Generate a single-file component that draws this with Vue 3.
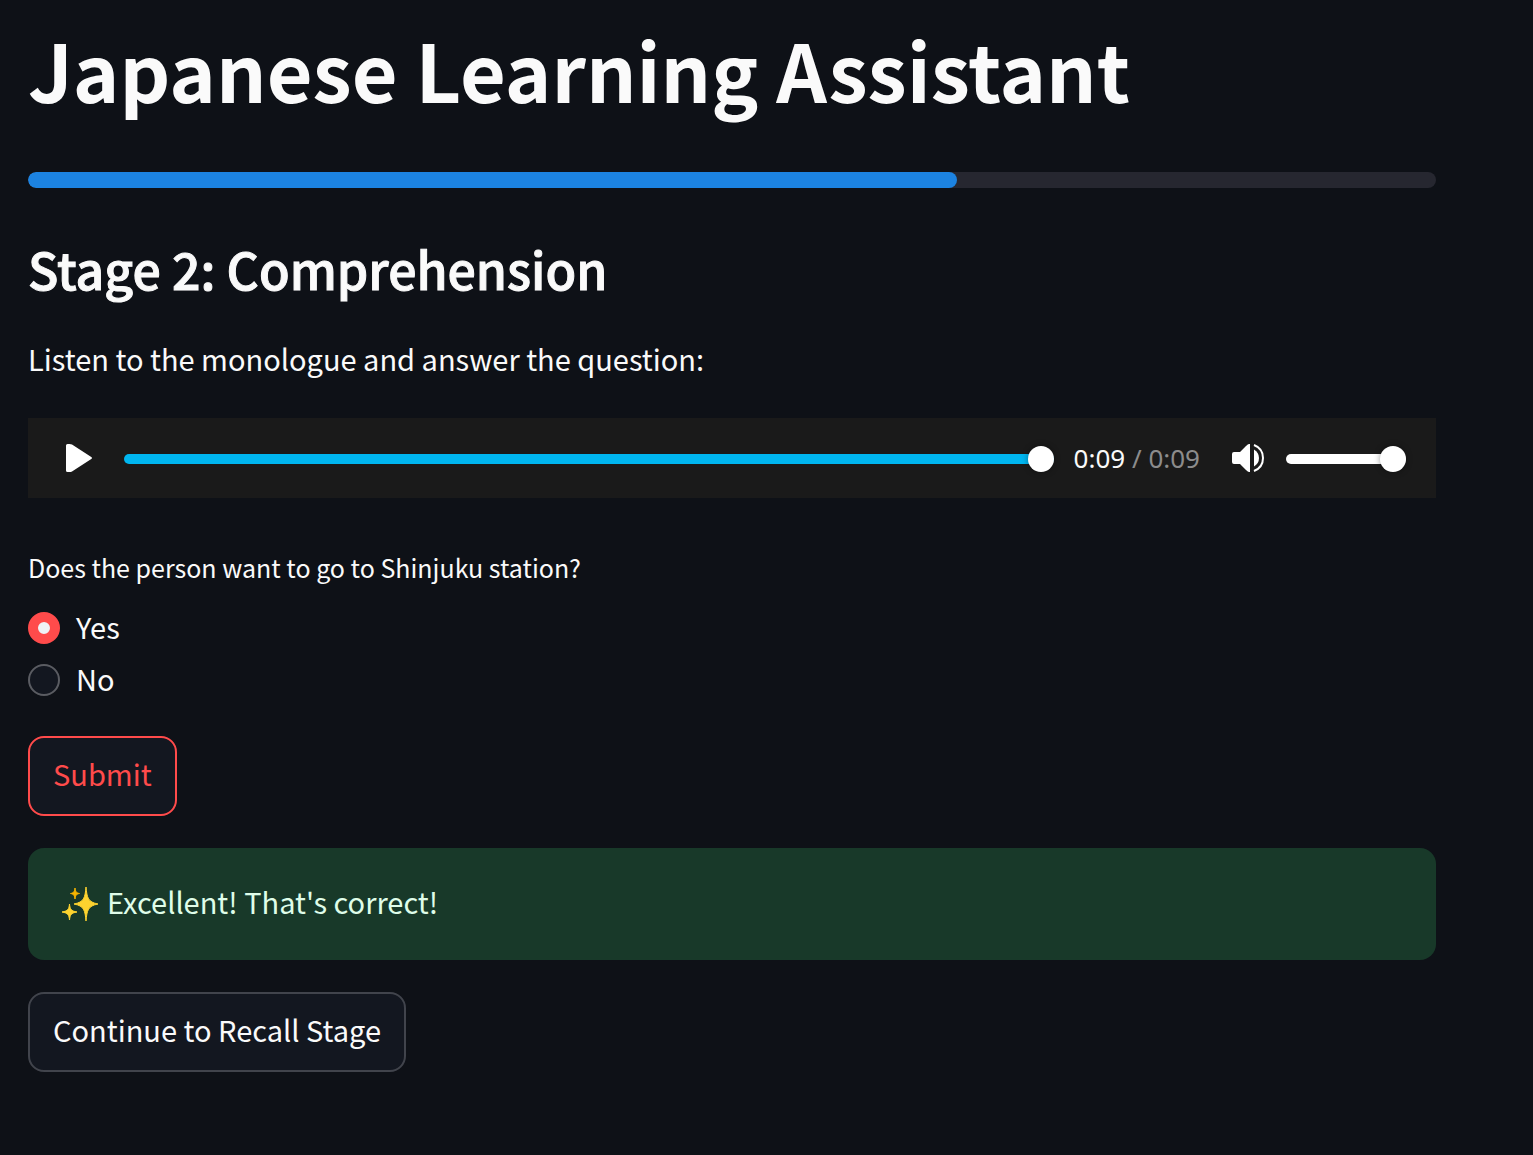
<script setup>
import { ref, computed } from 'vue'

const progress = ref(66)
const answer = ref('Yes')
const options = ['Yes', 'No']
const position = ref(9)
const duration = 9
const volume = ref(100)

const clock = (s) => `${Math.floor(s / 60)}:${String(s % 60).padStart(2, '0')}`
const elapsed = computed(() => clock(Number(position.value)))
</script>

<template>
  <main class="page">
    <h1 class="title">Japanese Learning Assistant</h1>

    <div class="progress" role="progressbar" aria-label="Lesson progress" :aria-valuenow="progress">
      <div class="progress-fill" :style="{ width: progress + '%' }"></div>
    </div>

    <h2 class="stage">Stage 2: Comprehension</h2>
    <p class="intro">Listen to the monologue and answer the question:</p>

    <section class="player" aria-label="Monologue">
      <button class="icon-button" type="button" aria-label="Play">
        <svg width="26" height="28" viewBox="0 0 26 28">
          <path d="M0 1.5Q0 0 1.5 0H3.5Q5 0 6 .6L24.500 12.500Q26 13.200 26 14Q26 14.800 24.500 15.500L6 27.400Q5 28 3.500 28H1.500Q0 28 0 26.500Z" fill="#fff" />
        </svg>
      </button>
      <input v-model="position" class="slider seek" type="range" min="0" :max="duration" aria-label="Seek" />
      <span class="time">{{ elapsed }} <span class="total">/ {{ clock(duration) }}</span></span>
      <button class="icon-button mute" type="button" aria-label="Mute">
        <svg width="32" height="28" viewBox="0 0 32 28">
          <path d="M2 8H8L14 2Q16 0 17 0H18V28H17Q16 28 14 26L8 20H2Q0 20 0 18V10Q0 8 2 8Z" fill="#fff" />
          <path d="M22 5.500Q27 8.500 27 14Q27 19.500 22 22.500Z" fill="#fff" />
          <path d="M22 1Q31 4.500 31 14Q31 23.500 22 27" fill="none" stroke="#fff" stroke-width="2" />
        </svg>
      </button>
      <input v-model="volume" class="slider volume" type="range" min="0" max="100" aria-label="Volume" />
    </section>

    <fieldset class="question">
      <legend>Does the person want to go to Shinjuku station?</legend>
      <label v-for="o in options" :key="o" class="option">
        <input v-model="answer" type="radio" name="answer" :value="o" />
        <span>{{ o }}</span>
      </label>
    </fieldset>

    <button class="button submit" type="button">Submit</button>

    <div class="alert" role="status">
      <svg class="sparkles" width="36" height="36" viewBox="0 0 36 36" aria-hidden="true">
        <path d="M24 1C25 12 26 16 36 18C26 20 25 24 24 35C23 24 22 20 12 18C22 16 23 12 24 1Z" fill="#fdd32f" stroke="#fdd32f" />
        <path d="M7.500 18C8 23 9 25 15 26C9 27 8 29 7.500 34C7 29 6 27 0 26C6 25 7 23 7.500 18Z" fill="#fdd32f" stroke="#fdd32f" />
        <path d="M13 2C13.400 5 14 7 17.500 7.500C14 8 13.400 10 13 13C12.600 10 12 8 8.500 7.500C12 7 12.600 5 13 2Z" fill="#f4b400" stroke="#f4b400" />
      </svg>
      <span class="alert-text">Excellent! That's correct!</span>
    </div>

    <button class="button" type="button">Continue to Recall Stage</button>
  </main>
</template>

<style>
body {
  background: #0e1117;
}
</style>

<style scoped>
.page {
  display: flex;
  flex-direction: column;
  align-items: stretch;
  padding: 16px 97px 80px 28px;
  color: #fafafa;
  font-family: "Noto Sans CJK JP", "Noto Sans", sans-serif;
  font-size: 29px;
  line-height: 48px;
}

.title {
  margin: 0;
  font-size: 79px;
  font-weight: 700;
  line-height: 106px;
}

.progress {
  height: 16px;
  margin-top: 50px;
  border-radius: 8px;
  background: #262730;
  overflow: hidden;
}

.progress-fill {
  height: 100%;
  border-radius: 8px;
  background: #1c83e1;
}

.stage {
  margin: 46px 0 0;
  font-size: 50px;
  font-weight: 500;
  line-height: 68px;
  -webkit-text-stroke: 1px currentColor;
}

.intro {
  margin: 32px 0 36px;
}

.player {
  display: flex;
  align-items: center;
  height: 80px;
  padding: 0 30px 0 38px;
  background: #1a1a1a;
}

.icon-button {
  display: flex;
  flex: none;
  padding: 0;
  border: 0;
  background: none;
}

.slider {
  appearance: none;
  height: 26px;
  margin: 2px 0 0;
  background: none;
}

.slider::-webkit-slider-runnable-track {
  height: 10px;
  border-radius: 5px;
  background: #fff;
}

.slider::-webkit-slider-thumb {
  appearance: none;
  width: 26px;
  height: 26px;
  margin-top: -8px;
  border-radius: 50%;
  background: #fff;
  box-shadow: 0 0 6px rgba(0, 0, 0, 0.4);
}

.seek {
  flex: 1;
  min-width: 0;
  margin-left: 32px;
}

.seek::-webkit-slider-runnable-track {
  background: #00b6f0;
}

.time {
  margin-left: 20px;
  font-family: "Noto Sans", sans-serif;
  font-size: 26px;
  white-space: nowrap;
}

.total {
  color: #8c8c8c;
}

.mute {
  margin-left: 32px;
}

.volume {
  width: 120px;
  margin-left: 22px;
}

.question {
  min-width: 0;
  margin: 45px 0 0;
  padding: 0;
  border: 0;
}

.question legend {
  padding: 0 0 9px;
  font-size: 25px;
}

.option {
  display: flex;
  align-items: center;
  gap: 16px;
  height: 48px;
  margin-top: 4px;
}

.option input {
  appearance: none;
  box-sizing: border-box;
  width: 32px;
  height: 32px;
  margin: 0;
  border: 2px solid #5a5c62;
  border-radius: 50%;
  background: #131720;
}

.option input:checked {
  border: 10px solid #ff4b4b;
  background: #f0f2f6;
}

.option span {
  padding-bottom: 4px;
}

.button {
  align-self: flex-start;
  height: 80px;
  margin: 32px 0 0;
  padding: 0 23px 6px;
  border: 2px solid #41444c;
  border-radius: 16px;
  background: #131720;
  color: #fafafa;
  font: inherit;
}

.submit {
  border-color: #ff4b4b;
  color: #ff4b4b;
}

.alert {
  display: flex;
  align-items: center;
  gap: 9px;
  margin-top: 32px;
  padding: 32px 34px;
  border-radius: 16px;
  background: #183929;
  color: #dffde9;
}

.alert-text {
  padding-bottom: 6px;
  line-height: 42px;
}
</style>
